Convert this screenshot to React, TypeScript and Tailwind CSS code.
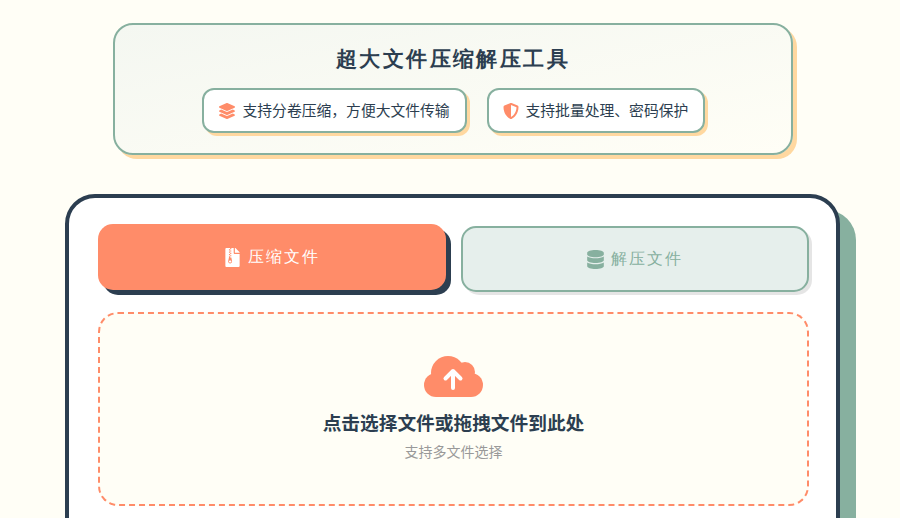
import { FaDatabase, FaFileArchive, FaLayerGroup, FaShieldAlt } from "react-icons/fa";

const sans = "font-['Noto_Sans_CJK_SC','Noto_Sans',sans-serif]";

function CloudUpload() {
  return (
    <svg viewBox="0 0 60 42" className="h-[42px] w-[60px]">
      <g className="fill-[#ff8c69]">
        <circle cx="12" cy="29" r="12" />
        <circle cx="47" cy="29" r="12" />
        <circle cx="24" cy="17" r="17" />
        <circle cx="41" cy="16" r="10" />
        <rect x="12" y="20" width="35" height="21" />
      </g>
      <path d="M29 32V15M21.5 22.5L29 15l7.5 7.5" fill="none" stroke="#ffffff" strokeWidth="4" strokeLinecap="round" strokeLinejoin="round" />
    </svg>
  );
}

export default function App() {
  return (
    <div className={`h-[518px] overflow-hidden bg-[#fffef6] pl-[65px] pt-[23px] text-[#2c3e50] ${sans}`}>
      {/* 头部 */}
      <div className="ml-[48px] flex h-[132px] w-[680px] flex-col items-center rounded-[20px] border-2 border-[#87b09f] bg-gradient-to-br from-[#f4f7f1] to-[#fffef6] pt-[17px] shadow-[4px_4px_0_#ffd8a0]">
        <h1 className="font-serif text-[21px] leading-[34px] font-bold tracking-[2.4px]">超大文件压缩解压工具</h1>
        <div className="mt-[12px] flex gap-5">
          <div className="flex h-[45px] w-[265px] items-center gap-[8px] rounded-[12px] border-2 border-[#87b09f] bg-white pl-[15px] text-[14.8px] shadow-[3px_3px_0_#ffd8a0]">
            <FaLayerGroup className="size-[16px] text-[#ff8c69]" />
            <span>支持分卷压缩，方便大文件传输</span>
          </div>
          <div className="flex h-[45px] w-[218px] items-center gap-[7px] rounded-[12px] border-2 border-[#87b09f] bg-white pl-[14px] text-[14.8px] shadow-[3px_3px_0_#ffd8a0]">
            <FaShieldAlt className="size-[16px] text-[#ff8c69]" />
            <span>支持批量处理、密码保护</span>
          </div>
        </div>
      </div>

      {/* 主体 */}
      <div className="mt-[39px] h-[400px] w-[775px] rounded-[30px] border-4 border-[#2c3e50] bg-white pt-[28px] pr-[27px] pl-[29px] shadow-[16px_16px_0_#87b09f]">
        <div className="grid grid-cols-2 gap-[15px]">
          <button className="flex h-[66px] -translate-y-[2px] items-center justify-center gap-[6px] rounded-[15px] bg-[#ff8c69] pr-[2px] font-serif text-[16px] tracking-[2px] text-white shadow-[5px_5px_0_#2c3e50]">
            <FaFileArchive className="size-[19px]" />
            <span>压缩文件</span>
          </button>
          <button className="flex h-[66px] items-center justify-center gap-[6px] rounded-[15px] border-2 border-[#87b09f] bg-[#e6efec] pr-[2px] font-serif text-[16px] tracking-[2px] text-[#87b09f] shadow-[3px_3px_0_rgba(0,0,0,0.1)]">
            <FaDatabase className="size-[19px]" />
            <span>解压文件</span>
          </button>
        </div>
        <div className="mt-[20px] flex h-[194px] flex-col items-center rounded-[20px] border-2 border-dashed border-[#ff8c69] bg-[#fffef6] pt-[42px]">
          <CloudUpload />
          <div className="mt-[10px] text-[18.7px] leading-[28px] font-bold">点击选择文件或拖拽文件到此处</div>
          <div className="mt-[5px] text-[14px] leading-[20px] text-[#999999]">支持多文件选择</div>
        </div>
      </div>
    </div>
  );
}
